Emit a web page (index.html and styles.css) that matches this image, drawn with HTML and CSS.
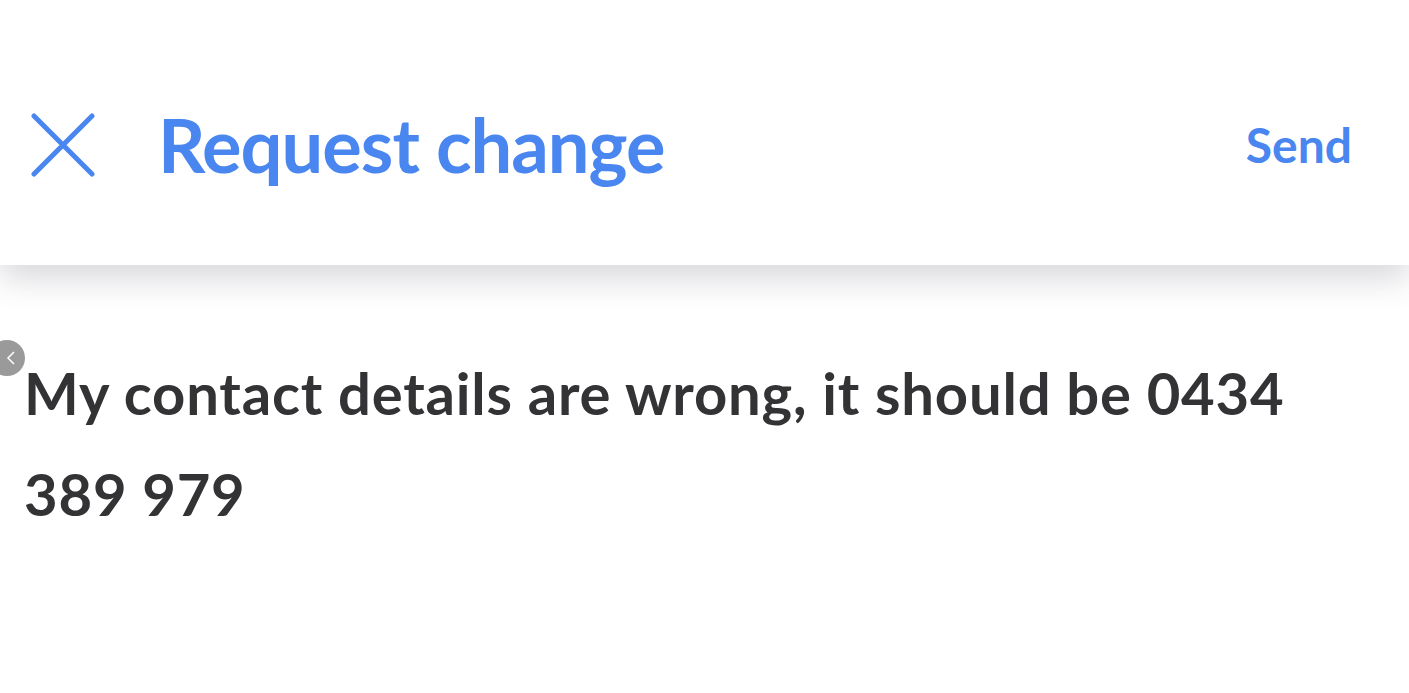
FILE: index.html
```html
<!DOCTYPE html>
<html>
<head>
<meta charset="utf-8">
<link rel="stylesheet" href="styles.css">
</head>
<body>
<header class="topbar">
  <div class="left">
    <svg class="close" width="64" height="64" viewBox="0 0 64 64" aria-hidden="true">
      <path d="M3 3 L61 61 M61 3 L3 61" stroke="#4a86ef" stroke-width="5" stroke-linecap="round" fill="none"/>
    </svg>
    <h1 class="title">Request change</h1>
  </div>
  <div class="send">Send</div>
</header>
<main class="content">
  <p class="message">My contact details are wrong, it should be 0434 389 979</p>
</main>
<div class="backbtn">
  <svg width="10" height="16" viewBox="0 0 10 16" aria-hidden="true">
    <path d="M8 2 L2 8 L8 14" stroke="#fff" stroke-width="1.5" fill="none"/>
  </svg>
</div>
</body>
</html>
```
FILE: styles.css
```css
html, body {
  margin: 0;
  padding: 0;
  background: #ffffff;
  font-family: Lato, "Noto Sans", sans-serif;
}
.topbar {
  height: 265px;
  background: #fff;
  box-shadow: 0 14px 30px rgba(80, 80, 100, 0.22);
  display: flex;
  align-items: center;
  justify-content: space-between;
  padding: 0 57px 0 31px;
  box-sizing: border-box;
  position: relative;
  z-index: 1;
}
.left {
  display: flex;
  align-items: center;
  gap: 63px;
  margin-top: 24px;
}
.close {
  display: block;
}
.title {
  margin: 0;
  font-size: 74px;
  font-weight: 700;
  color: #4a86ef;
  letter-spacing: -1px;
  line-height: 1;
}
.send {
  font-size: 48px;
  font-weight: 700;
  color: #4a86ef;
  margin-top: 24px;
}
.content {
  padding: 77px 24px 0 24px;
}
.message {
  margin: 0;
  width: 1300px;
  font-size: 58px;
  font-weight: 700;
  color: #333336;
  line-height: 101px;
  letter-spacing: 0.8px;
}
.backbtn {
  position: absolute;
  left: -11px;
  top: 340px;
  width: 36px;
  height: 36px;
  border-radius: 50%;
  background: #9a9a9a;
  display: flex;
  align-items: center;
  justify-content: center;
  padding-left: 8px;
  box-sizing: border-box;
}
```
